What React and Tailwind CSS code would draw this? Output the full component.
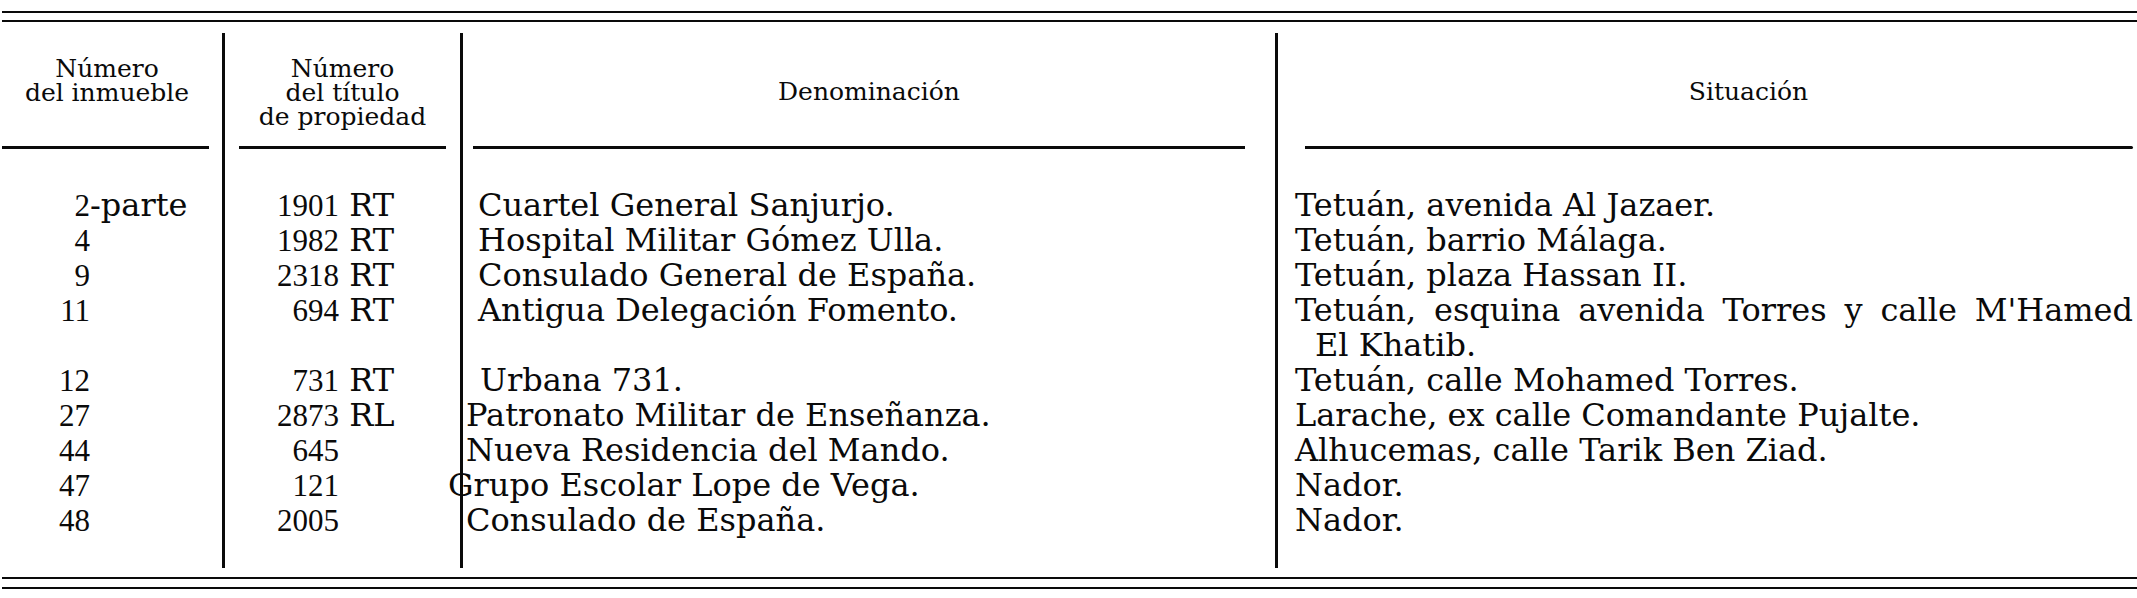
import React from "react";

const rows = [
  { n: "2", ns: "-parte", t: "1901", ts: " RT", d: "Cuartel General Sanjurjo.", dx: "pl-[15px]", s: "Tetuán, avenida Al Jazaer." },
  { n: "4", t: "1982", ts: " RT", d: "Hospital Militar Gómez Ulla.", dx: "pl-[15px]", s: "Tetuán, barrio Málaga." },
  { n: "9", t: "2318", ts: " RT", d: "Consulado General de España.", dx: "pl-[15px]", s: "Tetuán, plaza Hassan II." },
  { n: "11", t: "694", ts: " RT", d: "Antigua Delegación Fomento.", dx: "pl-[15px]", wrap: true },
  { n: "12", t: "731", ts: " RT", d: "Urbana 731.", dx: "pl-[17px]", s: "Tetuán, calle Mohamed Torres." },
  { n: "27", t: "2873", ts: " RL", d: "Patronato Militar de Enseñanza.", dx: "pl-[3px]", s: "Larache, ex calle Comandante Pujalte." },
  { n: "44", t: "645", d: "Nueva Residencia del Mando.", dx: "pl-[3px]", s: "Alhucemas, calle Tarik Ben Ziad." },
  { n: "47", t: "121", d: "Grupo Escolar Lope de Vega.", dx: "-ml-[15px]", s: "Nador." },
  { n: "48", t: "2005", d: "Consulado de España.", dx: "pl-[3px]", s: "Nador." },
];

function rowH(r) {
  return r.wrap ? "h-[70px]" : "h-[35px]";
}

function Header({ className, children }) {
  return (
    <div className={`h-[113px] text-[25px] leading-[24px] text-center ${className}`}>
      {children}
    </div>
  );
}

export default function App() {
  return (
    <div className="w-[2137px] h-[598px] bg-white text-[#0a0a0a] font-['DejaVu_Serif',serif] overflow-hidden">
      {/* top double rule */}
      <div className="pt-[11px]">
        <div className="h-[2px] ml-[2px] bg-[#0a0a0a]" />
        <div className="h-[2px] ml-[2px] mt-[7px] bg-[#0a0a0a]" />
      </div>

      <div className="mt-[11px] h-[535px] grid grid-cols-[222px_238px_815px_862px]">
        {/* Número del inmueble */}
        <div>
          <Header className="pt-[24px] pr-[8px]">
            <div>Número</div>
            <div>del inmueble</div>
          </Header>
          <div className="h-[3px] ml-[2px] mr-[13px] bg-[#0a0a0a]" />
          <div className="mt-[39px] text-[32px] leading-[35px] whitespace-nowrap">
            {rows.map((r) => (
              <div key={r.n} className={rowH(r)}>
                <span className="inline-block w-[90px] text-right font-['Liberation_Serif',serif] text-[31px]">
                  {r.n}
                </span>
                {r.ns}
              </div>
            ))}
          </div>
        </div>

        {/* Número del título de propiedad */}
        <div className="border-l-[3px] border-[#0a0a0a]">
          <Header className="pt-[24px]">
            <div>Número</div>
            <div>del título</div>
            <div>de propiedad</div>
          </Header>
          <div className="h-[3px] ml-[14px] w-[207px] bg-[#0a0a0a]" />
          <div className="mt-[39px] text-[32px] leading-[35px] whitespace-nowrap">
            {rows.map((r) => (
              <div key={r.n} className={rowH(r)}>
                <span className="inline-block w-[114px] text-right font-['Liberation_Serif',serif] text-[31px]">
                  {r.t}
                </span>
                {r.ts}
              </div>
            ))}
          </div>
        </div>

        {/* Denominación */}
        <div className="border-l-[3px] border-[#0a0a0a]">
          <Header className="pt-[47px]">Denominación</Header>
          <div className="h-[3px] ml-[10px] w-[772px] bg-[#0a0a0a]" />
          <div className="mt-[39px] text-[32px] leading-[35px] whitespace-nowrap">
            {rows.map((r) => (
              <div key={r.n} className={`${rowH(r)} ${r.dx}`}>
                {r.d}
              </div>
            ))}
          </div>
        </div>

        {/* Situación */}
        <div className="border-l-[3px] border-[#0a0a0a]">
          <Header className="pt-[47px] pl-[82px]">Situación</Header>
          <div className="h-[3px] ml-[27px] w-[828px] bg-[#0a0a0a] rounded-r-full" />
          <div className="mt-[39px] text-[32px] leading-[35px] whitespace-nowrap">
            {rows.map((r) =>
              r.wrap ? (
                <div key={r.n} className="h-[70px] pl-[17px] pr-[4px]">
                  <div className="text-justify [text-align-last:justify]">
                    Tetuán, esquina avenida Torres y calle M'Hamed
                  </div>
                  <div className="pl-[20px]">El Khatib.</div>
                </div>
              ) : (
                <div key={r.n} className="h-[35px] pl-[17px]">
                  {r.s}
                </div>
              )
            )}
          </div>
        </div>
      </div>

      {/* bottom double rule */}
      <div className="mt-[9px] h-[2px] ml-[2px] bg-[#0a0a0a]" />
      <div className="mt-[8px] h-[2px] ml-[2px] bg-[#0a0a0a]" />
    </div>
  );
}
